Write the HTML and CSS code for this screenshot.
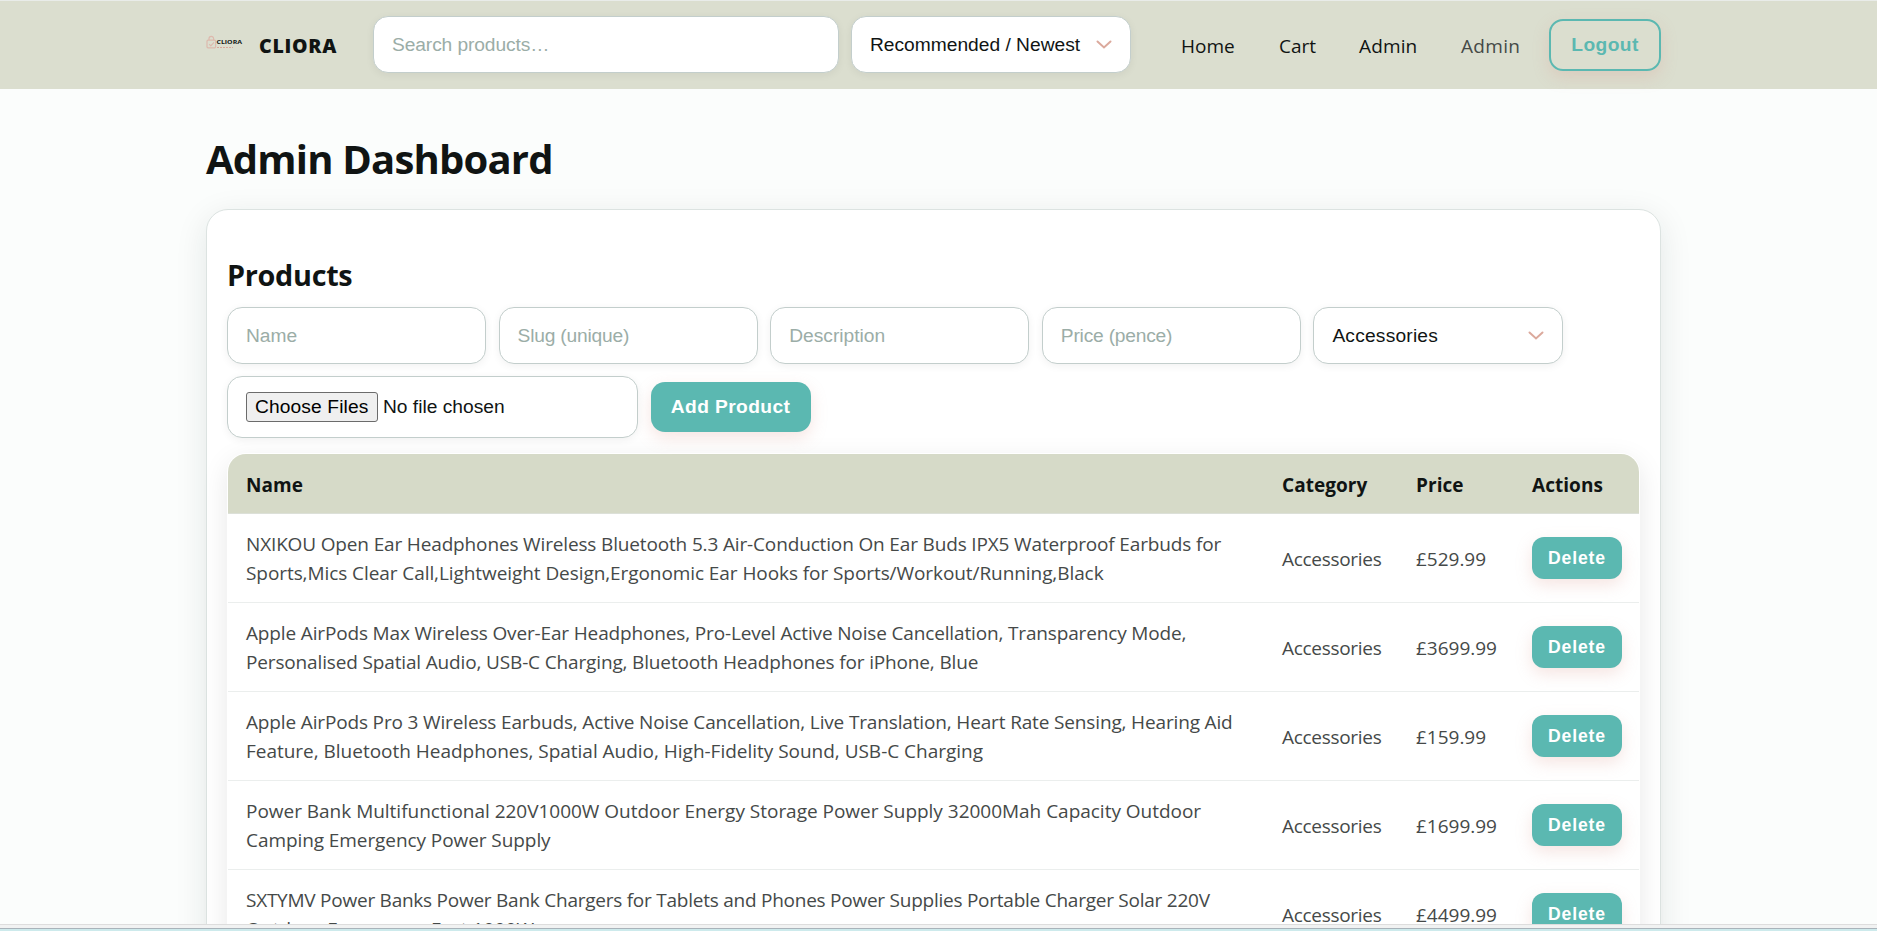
FILE: index.html
```html
<!DOCTYPE html>
<html lang="en">
<head>
<meta charset="utf-8">
<title>Cliora – Admin Dashboard</title>
<link rel="stylesheet" href="styles.css">
</head>
<body>
<div class="viewport">
  <header class="topbar">
    <a class="brand">
      <svg class="logo" width="38" height="38" viewBox="0 0 38 38">
        <g fill="none" stroke="#ddb9ad" stroke-width="1.2">
          <rect x="1" y="13.2" width="8.6" height="7.6" rx="1"/>
          <path d="M3 13V11.600a2.300 2.300 0 0 1 4.600 0V13M3.200 17.200l1.600 1.600 3.200-3.400"/>
        </g>
        <text x="10.500" y="17" class="logo-text" textLength="25.500" lengthAdjust="spacingAndGlyphs">CLIORA</text>
        <path d="M11 20.500h16" stroke="#d9a79b" stroke-width="1" stroke-dasharray="2 1"/>
      </svg>
      <span class="brand-name">CLIORA</span>
    </a>
    <input class="field search" type="text" placeholder="Search products…">
    <div class="field select sort"><span>Recommended / Newest</span><svg class="chev" width="16" height="10" viewBox="0 0 16 10"><path d="M1.500 1.500l6.500 6 6.500-6"/></svg></div>
    <nav class="nav">
      <a class="home">Home</a><a class="cart">Cart</a><a class="adm">Admin</a><span class="user">Admin</span>
    </nav>
    <button class="btn outline">Logout</button>
  </header>
  <main class="page">
    <h1>Admin Dashboard</h1>
    <section class="card">
      <h2>Products</h2>
      <form class="form">
        <input class="field" type="text" placeholder="Name">
        <input class="field tight" type="text" placeholder="Slug (unique)">
        <input class="field" type="text" placeholder="Description">
        <input class="field tight" type="text" placeholder="Price (pence)">
        <div class="field select cat"><span>Accessories</span><svg class="chev" width="16" height="10" viewBox="0 0 16 10"><path d="M1.500 1.500l6.500 6 6.500-6"/></svg></div>
        <div class="field file"><span class="choose">Choose Files</span><span class="nofile">No file chosen</span></div>
        <button class="btn add" type="button">Add Product</button>
      </form>
      <div class="table">
        <div class="row head"><span>Name</span><span>Category</span><span>Price</span><span>Actions</span></div>
        <div class="row"><span class="n">NXIKOU Open Ear Headphones Wireless Bluetooth 5.3 Air-Conduction On Ear Buds IPX5 Waterproof Earbuds for<br><span class="wide">Sports,Mics Clear Call,Lightweight Design,Ergonomic Ear Hooks for Sports/Workout/Running,Black</span></span><span class="c">Accessories</span><span class="p">£529.99</span><button class="btn del">Delete</button></div>
        <div class="row"><span class="n">Apple AirPods Max Wireless Over-Ear Headphones, Pro-Level Active Noise Cancellation, Transparency Mode,<br>Personalised Spatial Audio, USB-C Charging, Bluetooth Headphones for iPhone, Blue</span><span class="c">Accessories</span><span class="p">£3699.99</span><button class="btn del">Delete</button></div>
        <div class="row"><span class="n">Apple AirPods Pro 3 Wireless Earbuds, Active Noise Cancellation, Live Translation, Heart Rate Sensing, Hearing Aid<br><span class="wider">Feature, Bluetooth Headphones, Spatial Audio, High-Fidelity Sound, USB-C Charging</span></span><span class="c">Accessories</span><span class="p">£159.99</span><button class="btn del">Delete</button></div>
        <div class="row"><span class="n"><span class="wider">Power Bank Multifunctional 220V1000W Outdoor Energy Storage Power Supply 32000Mah Capacity Outdoor</span><br><span class="wide">Camping Emergency Power Supply</span></span><span class="c">Accessories</span><span class="p">£1699.99</span><button class="btn del">Delete</button></div>
        <div class="row"><span class="n"><span class="narrow">SXTYMV Power Banks Power Bank Chargers for Tablets and Phones Power Supplies Portable Charger Solar 220V</span><br><span class="widest">Outdoor Emergency Fast 1000W</span></span><span class="c">Accessories</span><span class="p">£4499.99</span><button class="btn del">Delete</button></div>
      </div>
    </section>
  </main>
</div>
<footer class="edge"></footer>
</body>
</html>
```

FILE: styles.css
```css
* { box-sizing: border-box; }
body { margin: 0; height: 931px; overflow: hidden; display: flex; flex-direction: column; background: #fbfdfc; color: #101413; font-family: "Open Sans", "Noto Sans", sans-serif; font-size: 19px; }
.viewport { height: 924px; flex: none; overflow: hidden; }
.topbar { height: 89px; border-top: 1px solid #e9ece9; background: #dbdecf; padding: 0 216px 1px 206px; display: flex; align-items: center; }
.brand { display: flex; align-items: center; width: 168px; flex: none; }
.logo { width: 38px; flex: none; margin-top: 2px; }
.logo-text { font: 700 5.5px "Open Sans", sans-serif; fill: #101413; }
.brand-name { font-size: 19.5px; font-weight: 800; letter-spacing: .75px; margin-left: 15px; padding-top: 1px; }
.field { height: 57px; width: 259px; flex: none; border: 1px solid #c3cecc; border-radius: 15px; background: #fff; padding: 0 18px; font: 19.2px/24px "Liberation Sans", Arial, sans-serif; color: #101413; box-shadow: 0 2px 8px rgba(16, 20, 19, .06); outline: 0; }
.field::placeholder { color: #9bada7; opacity: 1; }
.tight::placeholder { letter-spacing: -.2px; }
.search { width: 466px; margin: 0 12px 0 -1px; letter-spacing: -.1px; }
.select { display: flex; align-items: center; justify-content: space-between; }
.sort { width: 280px; }
.chev { fill: none; stroke: #dba99c; stroke-width: 2; stroke-linecap: round; }
.nav { display: flex; flex: 1; padding: 2px 0 0 50px; }
.home { width: 98px; }
.cart { width: 80px; }
.adm { width: 102px; letter-spacing: .15px; }
.user { color: #454a47; letter-spacing: .3px; }
.btn { border: 0; border-radius: 14px; background: #5bb8b1; color: #fff; font: 700 19.2px "Liberation Sans", Arial, sans-serif; letter-spacing: .4px; box-shadow: 0 6px 16px rgba(219, 150, 140, .25); padding: 0; flex: none; }
.outline { width: 112px; height: 52px; border: 2px solid #5bb8b1; background: transparent; color: #5bb8b1; }
.page { width: 1455px; margin-left: 206px; }
h1 { margin: 43px 0 0; font-size: 40px; line-height: 54px; font-weight: 700; letter-spacing: -.8px; }
.card { margin-top: 23px; height: 1200px; border: 1px solid #dce3e1; border-radius: 22px; background: #fff; padding: 45px 20px; box-shadow: 0 8px 32px rgba(16, 40, 36, .1); }
h2 { margin: 0; font-size: 28.8px; line-height: 40px; letter-spacing: -.3px; }
.form { margin-top: 12px; display: flex; flex-wrap: wrap; gap: 12px 12.6px; align-items: center; }
.cat { width: 250px; letter-spacing: .2px; }
.file { width: 411px; height: 62px; display: flex; align-items: center; }
.choose { border: 1px solid #6b6b6b; border-radius: 3px; background: #efefef; color: #000; padding: 2px 8px; height: 30px; margin-right: 5px; width: 132px; white-space: nowrap; letter-spacing: .12px; }
.add { width: 160px; height: 50px; }
.table { margin: 16px 0 0 1px; width: 1411px; border-radius: 18px 18px 0 0; background: #fff; box-shadow: 0 0 0 1px #fff, 0 8px 28px rgba(16, 20, 19, .1); }
.row { display: grid; grid-template-columns: 1036px 134px 116px 90px; padding-left: 18px; align-items: center; height: 89px; border-bottom: 1px solid #ebeeed; color: #454948; line-height: 29px; letter-spacing: -.15px; white-space: nowrap; }
.head { height: 60px; padding-top: 4px; background: #d6dac8; border-radius: 18px 18px 0 0; color: #101413; font-weight: 700; letter-spacing: .05px; border-bottom-color: #dce0d8; }
.n { padding-top: 2px; }
.narrow { letter-spacing: -.245px; }
.wide { letter-spacing: -.075px; }
.wider { letter-spacing: -.02px; }
.widest { letter-spacing: .1px; }
.c { padding-top: 2px; letter-spacing: -.3px; }
.p { padding-top: 2px; letter-spacing: -.02px; }
.del { height: 42px; width: 90px; border-radius: 12px; font-size: 17.6px; letter-spacing: .85px; }
.edge { height: 7px; background: linear-gradient(#ddd 0 1px, #f1f2f2 1px 4px, #a9b3ba 4px 5px, #cdeaec 5px); }
```
